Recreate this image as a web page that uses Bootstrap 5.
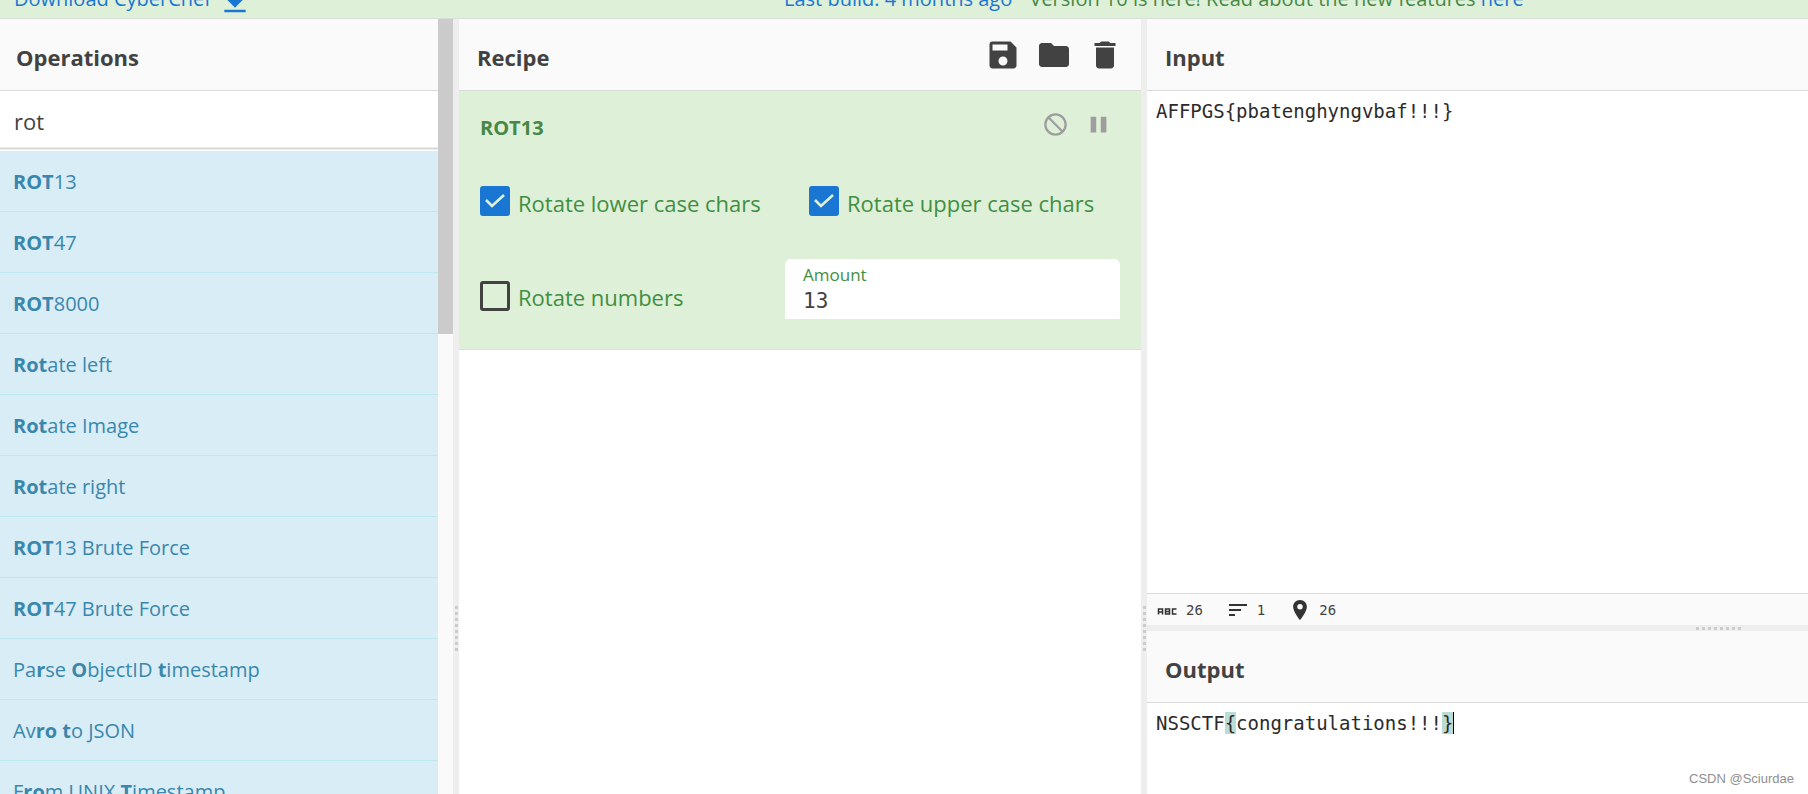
<!DOCTYPE html>
<html lang="en">
<head>
<meta charset="utf-8">
<meta name="viewport" content="width=device-width, initial-scale=1">
<title>CyberChef</title>
<link href="https://cdn.jsdelivr.net/npm/bootstrap@5.3.0/dist/css/bootstrap.min.css" rel="stylesheet">
<style>
:root { --line: #dbdbdb; --pane: #fafafa; --split: #eeeeee; --ink: #424242; --green-bg: #dff0d8; --green: #3f8f43; --blue: #1976d2; }
body { font-family: "Open Sans", "Noto Sans", sans-serif; font-size: 20px; line-height: 28px; color: var(--ink); }
a { color: var(--blue); text-decoration: none; }
.mono { font-family: "DejaVu Sans Mono", monospace; }
.banner { height: 19px; padding-bottom: 5px; background: var(--green-bg); border-bottom: 1px solid var(--line); color: #468847; font-size: 20px; }
.banner-left { width: 784px; max-width: 44%; padding-left: 14px; }
.workspace { display: grid; grid-template-columns: minmax(0, 453fr) 6px minmax(0, 682fr) 6px minmax(0, 661fr); min-height: 0; }
.pane-title { height: 72px; background: var(--pane); border-bottom: 1px solid var(--line); padding: 0 18px; }
.pane-title h2 { font-size: 22px; line-height: 32px; font-weight: 700; margin: 4px 0 0; }
.splitter { background: var(--split); }
.splitter-v { padding-bottom: 143px; padding-left: 1px; }
.splitter-h { height: 6px; padding-right: 67px; }
.grip-v { width: 3px; height: 45px; background: repeating-linear-gradient(#ccc 0 3px, transparent 3px 6px); }
.grip-h { width: 45px; height: 3px; background: repeating-linear-gradient(90deg, #ccc 0 3px, transparent 3px 6px); }
.search { height: 60px; border: 0; padding: 0 14px; font-size: 22px; color: var(--ink); outline: 0; box-shadow: inset 0 -1px #fff, inset 0 -2px #ececec, inset 0 -3px #d6d6d6, inset 0 -4px #ececec; }
.op-list .list-group-item { height: 61px; flex: none; padding: 16px 13px 14px; font-size: 20px; line-height: 30px; color: #3a87ad; background: #d9edf7; border: 0; border-bottom: 1px solid #bce8f1; border-radius: 0; }
.op-list b { font-weight: 700; }
.track { width: 15px; background: var(--pane); }
.thumb { height: 40.6%; background: #cbcbcb; }
.icon-btn { border: 0; background: none; padding: 0; line-height: 0; color: var(--ink); }
.icon-btn svg { fill: currentColor; }
.tools { gap: 15px; }
.operation { background: var(--green-bg); border-bottom: 1px solid #d6e9c6; color: var(--green); padding: 20px 21px 30px; }
.operation h3 { font-size: 20px; line-height: 34px; font-weight: 700; color: #468847; margin: 0 0 41px; }
.args { display: grid; grid-template-columns: minmax(0, 305fr) minmax(0, 335fr); row-gap: 40px; align-items: center; }
.tick { gap: 8px; font-size: 22px; line-height: 32px; white-space: nowrap; }
.tick .form-check-input { width: 30px; height: 30px; margin: 0 0 3px; border: 3px solid var(--ink); border-radius: 3px; background-color: transparent; }
.tick .form-check-input:checked { border-color: var(--blue); background-color: var(--blue); background-size: 30px 30px; background-position: center; background-image: url("data:image/svg+xml,%3Csvg xmlns='http://www.w3.org/2000/svg' viewBox='0 0 30 30'%3E%3Cpath d='M6 14l6 6L24 9' fill='none' stroke='%23dff0d8' stroke-width='2.6'/%3E%3C/svg%3E"); }
.amount { background: #fff; border-radius: 6px 6px 0 0; height: 60px; padding: 4px 18px 0; }
.amount label { font-size: 17px; line-height: 24px; }
.amount input { border: 0; padding: 0; height: 28px; outline: 0; color: var(--ink); font-size: 21px; }
.editor { font-size: 19px; line-height: 24px; color: #2b2b2b; padding: 8px 9px; }
.bracket { background: #bbdcd5; }
.caret { border-right: 1px solid #000; }
.status { height: 32px; background: var(--pane); border-top: 1px solid var(--line); font-size: 14px; line-height: 30px; padding-left: 9px; color: #424242; }
.status svg { fill: #333; }
.output-pane { height: 163px; }
.watermark { right: 14px; bottom: 6px; font-family: "Liberation Sans", sans-serif; font-size: 13px; line-height: 18px; color: #8f8f8f; }
</style>
</head>
<body class="vh-100 d-flex flex-column overflow-hidden">
<header class="banner d-flex align-items-end overflow-hidden flex-shrink-0">
  <div class="banner-left flex-shrink-0"><a class="d-flex gap-2 align-items-end" href="#">Download CyberChef
    <svg width="32" height="32" viewBox="0 -4 24 24" fill="#1976d2"><path d="M19 9h-4V3H9v6H5l7 7 7-7zM4 17.500v2h16v-2z"/></svg></a></div>
  <div class="text-nowrap"><a href="#">Last build: 4 months ago</a> <span class="ms-2 ps-1">Version 10 is here! Read about the new features <a href="#">here</a></span></div>
</header>
<main class="workspace flex-grow-1">
  <section class="d-flex overflow-hidden">
    <div class="flex-grow-1 d-flex flex-column overflow-hidden">
      <div class="pane-title d-flex align-items-center flex-shrink-0 ps-3"><h2>Operations</h2></div>
      <input class="search w-100 flex-shrink-0" type="text" value="rot" aria-label="Search operations">
      <ul class="op-list list-group rounded-0">
        <li class="list-group-item"><b>ROT</b>13</li>
        <li class="list-group-item"><b>ROT</b>47</li>
        <li class="list-group-item"><b>ROT</b>8000</li>
        <li class="list-group-item"><b>Rot</b>ate left</li>
        <li class="list-group-item"><b>Rot</b>ate Image</li>
        <li class="list-group-item"><b>Rot</b>ate right</li>
        <li class="list-group-item"><b>ROT</b>13 Brute Force</li>
        <li class="list-group-item"><b>ROT</b>47 Brute Force</li>
        <li class="list-group-item">Pa<b>r</b>se <b>O</b>bjectID <b>t</b>imestamp</li>
        <li class="list-group-item">Av<b>ro</b> <b>t</b>o JSON</li>
        <li class="list-group-item">F<b>ro</b>m UNIX <b>T</b>imestamp</li>
      </ul>
    </div>
    <div class="track flex-shrink-0"><div class="thumb"></div></div>
  </section>
  <div class="splitter splitter-v d-flex align-items-end justify-content-center"><div class="grip-v"></div></div>
  <section class="overflow-hidden">
    <div class="pane-title d-flex align-items-center justify-content-between">
      <h2>Recipe</h2>
      <div class="tools d-flex">
        <button class="icon-btn" aria-label="Save recipe"><svg width="36" height="36" viewBox="0 0 24 24"><path d="M17 3H5a2 2 0 0 0-2 2v14c0 1.100.900 2 2 2h14c1.100 0 2-.900 2-2V7l-4-4zm-5 16a3 3 0 1 1 0-6 3 3 0 0 1 0 6zm3-10H5V5h10v4z"/></svg></button>
        <button class="icon-btn" aria-label="Load recipe"><svg width="36" height="36" viewBox="0 0 24 24"><path d="M10 4H4c-1.100 0-2 .900-2 2v12c0 1.100.900 2 2 2h16c1.100 0 2-.900 2-2V8c0-1.100-.900-2-2-2h-8l-2-2z"/></svg></button>
        <button class="icon-btn" aria-label="Clear recipe"><svg width="36" height="36" viewBox="0 0 24 24"><path d="M6 19c0 1.100.900 2 2 2h8c1.100 0 2-.900 2-2V7H6v12zM19 4h-3.500l-1-1h-5l-1 1H5v2h14V4z"/></svg></button>
      </div>
    </div>
    <article class="operation">
      <div class="d-flex justify-content-between align-items-start">
        <h3>ROT13</h3>
        <div class="d-flex gap-3 pe-2">
          <button class="icon-btn" aria-label="Disable operation"><svg width="27" height="27" viewBox="0 0 24 24" stroke="#9e9e9e" stroke-width="2"><path d="M12 3a9 9 0 1 0 0 18 9 9 0 0 0 0-18zM5.600 5.600l12.800 12.800" fill="none"/></svg></button>
          <button class="icon-btn" aria-label="Set breakpoint"><svg width="27" height="27" viewBox="0 0 24 24"><path fill="#9e9e9e" d="M5 5h5v14H5zM14 5h5v14h-5z"/></svg></button>
        </div>
      </div>
      <div class="args">
        <label class="tick d-flex align-items-center"><input class="form-check-input" type="checkbox" checked>Rotate lower case chars</label>
        <label class="tick d-flex align-items-center ms-4"><input class="form-check-input" type="checkbox" checked>Rotate upper case chars</label>
        <label class="tick d-flex align-items-center mt-3"><input class="form-check-input" type="checkbox">Rotate numbers</label>
        <div class="amount d-flex flex-column"><label for="amount">Amount</label><input id="amount" class="mono w-100" type="text" value="13"></div>
      </div>
    </article>
  </section>
  <div class="splitter splitter-v d-flex align-items-end justify-content-center"><div class="grip-v"></div></div>
  <section class="d-flex flex-column overflow-hidden">
    <div class="pane-title d-flex align-items-center flex-shrink-0"><h2>Input</h2></div>
    <div class="editor mono flex-grow-1">AFFPGS{pbatenghyngvbaf!!!}</div>
    <div class="status mono d-flex flex-shrink-0 gap-4">
      <span class="d-flex align-items-center gap-2"><svg width="22" height="22" viewBox="0 0 22 22"><path fill="none" stroke="#333" stroke-width="1.500" d="M2.500 15.500V10h4v5.500M2.500 13h4M9.500 10h4v5h-4zM9.500 12.500h4M20.500 10h-4v5h4"/></svg>26</span>
      <span class="d-flex align-items-center gap-2"><svg width="22" height="22" viewBox="0 0 22 22"><path d="M2 5h18v2H2zM2 10h12v2H2zM2 15h6v2H2z"/></svg>1</span>
      <span class="d-flex align-items-center gap-2"><svg width="22" height="22" viewBox="0 0 24 24"><path d="M12 1c-4.400 0-7.500 3.300-7.500 7.500C4.500 14 12 23 12 23s7.500-9 7.500-14.500C19.500 4.300 16.400 1 12 1zm0 10.500a3 3 0 1 1 0-6 3 3 0 0 1 0 6z"/></svg>26</span>
    </div>
    <div class="splitter splitter-h d-flex align-items-center justify-content-end flex-shrink-0"><div class="grip-h"></div></div>
    <div class="output-pane flex-shrink-0 position-relative">
      <div class="pane-title d-flex align-items-center"><h2>Output</h2></div>
      <div class="editor mono">NSSCTF<span class="bracket">{</span>congratulations!!!<span class="bracket caret">}</span></div>
      <div class="watermark position-absolute">CSDN @Sciurdae</div>
    </div>
  </section>
</main>
<script src="https://cdn.jsdelivr.net/npm/bootstrap@5.3.0/dist/js/bootstrap.bundle.min.js"></script>
</body>
</html>
